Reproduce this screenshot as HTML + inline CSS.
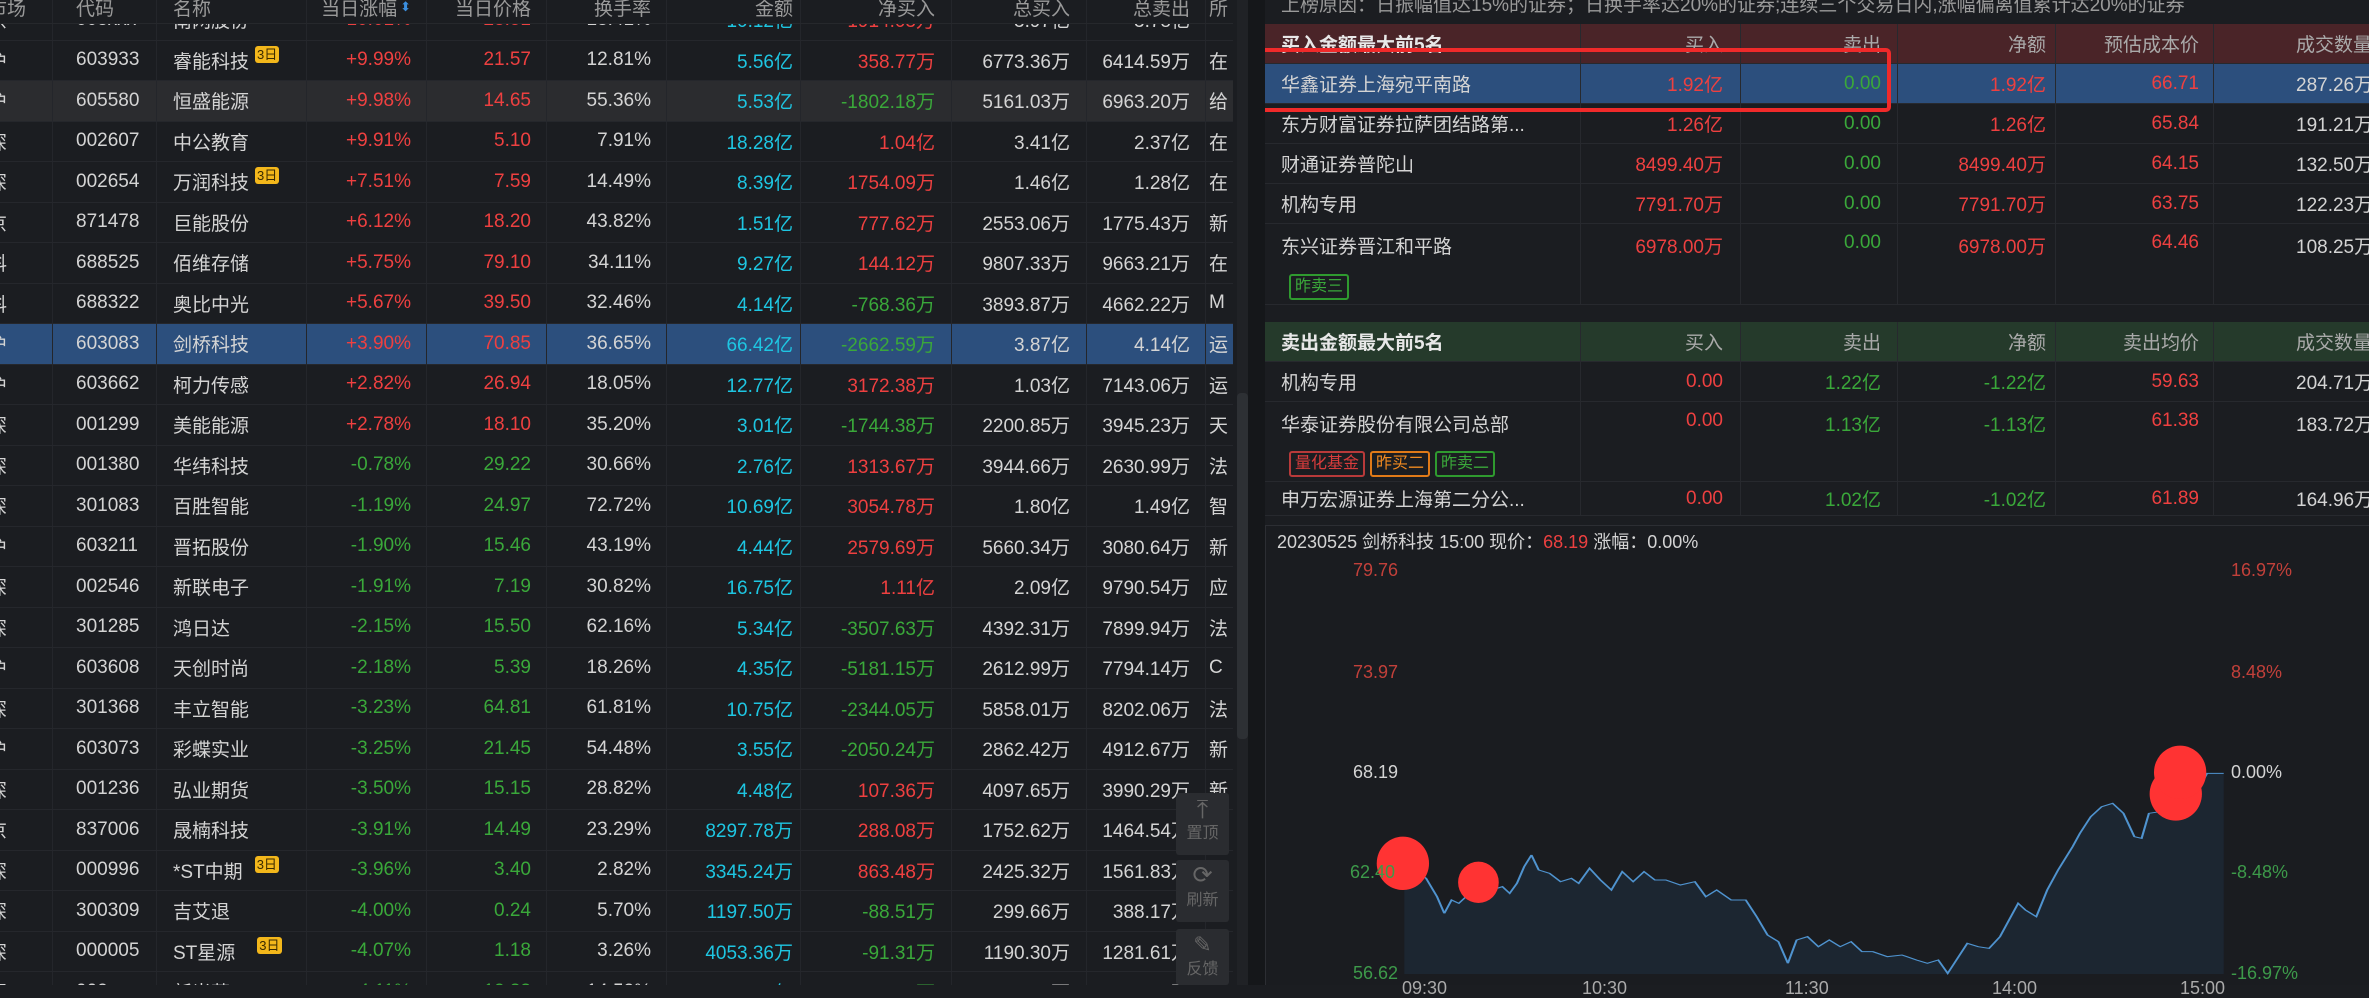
<!DOCTYPE html>
<html><head><meta charset="utf-8">
<style>
*{margin:0;padding:0;box-sizing:border-box}
body{width:2369px;height:985px;overflow:hidden;background:#1b1d21;font-family:"Liberation Sans","Noto Sans CJK SC",sans-serif;font-size:19px;color:#d4d4d4;position:relative}
#left{position:absolute;left:0;top:0;width:1233px;height:985px;overflow:hidden;background:#1b1d21}
.row{position:absolute;left:0;width:1233px;height:40.5px;display:flex;align-items:center;border-bottom:1px solid #25272c;white-space:nowrap}
.row>div{height:100%;display:flex;align-items:center;border-right:1px solid #24262b;overflow:hidden}
.c0{width:53px;padding-left:0;justify-content:flex-start;text-indent:-12px}
.c1{width:104px;padding-left:23px}
.c2{width:150px;padding-left:16px}
.c3{width:120px;justify-content:flex-end;padding-right:15px}
.c4{width:120px;justify-content:flex-end;padding-right:15px}
.c5{width:120px;justify-content:flex-end;padding-right:15px}
.c6{width:134px;justify-content:flex-end;padding-right:7px}
.c7{width:151px;justify-content:flex-end;padding-right:16px}
.c8{width:135px;justify-content:flex-end;padding-right:16px}
.c9{width:119px;justify-content:flex-end;padding-right:15px}
.c10{width:27px;padding-left:3px;border-right:none!important}
.r{color:#ee4040}.g{color:#3aa83a}.b{color:#1ec6e2}.w{color:#d4d4d4}
.bd{display:inline-block;background:#f3b71b;color:#3a2a00;font-size:13px;line-height:17px;padding:0 2px;border-radius:3px;margin-left:6px;position:relative;top:-6px}
.gray{background:#2b2c2f}
.sel{background:#2c4f7d}
#hdr{position:absolute;left:0;top:0;width:1233px;height:24px;background:#1b1d21;z-index:2;overflow:hidden;color:#9a9a9a;border-bottom:1px solid #26282c}
#hdr .row{top:-13px;border:none;color:#9a9a9a}
#sb{position:absolute;left:1237px;top:0;width:11px;height:985px;background:#202226}
#sbt{position:absolute;left:1237px;top:393px;width:11px;height:346px;background:#2d3034;border-radius:4px}
#gap{position:absolute;left:1248px;top:0;width:17px;height:985px;background:#15171a}
#rp{position:absolute;left:1265px;top:0;width:1104px;height:520px;background:#1b1d21;overflow:hidden}
.rr{position:absolute;left:0;width:1104px;height:40px;display:flex;align-items:center;border-bottom:1px solid #27292e;white-space:nowrap}
.rr>div{height:100%;display:flex;align-items:center;border-right:1px solid #27292e}
.n{width:316px;padding-left:16px}
.a{width:160px;justify-content:flex-end;padding-right:17px}
.bb{width:157px;justify-content:flex-end;padding-right:16px}
.cc{width:158px;justify-content:flex-end;padding-right:9px}
.dd{width:158px;justify-content:flex-end;padding-right:14px}
.ee{width:155px;justify-content:flex-end;padding-right:0;border-right:none!important;overflow:visible}
.hb{background:#4a2428;color:#aaa}
.hs{background:#253a2b;color:#aaa}
.hb .n,.hs .n{color:#e8e8e8;font-weight:bold}
.tag{display:inline-block;font-size:16px;line-height:22px;padding:0 4px;border:2px solid;border-radius:3px;margin-right:5px}
#chart{position:absolute;left:1265px;top:525px;width:1104px;height:460px;background:#1a1c20;border-top:1px solid #2c2e33;border-left:1px solid #2c2e33}
.lbl{position:absolute;font-size:18px;line-height:20px}
.fb{position:absolute;left:1176px;width:53px;height:62px;background:#2a2c30;border-radius:3px;color:#666;font-size:16px;text-align:center;z-index:3}
</style></head><body>
<div id="left">
<div id="hdr"><div class="row" style="top:-13px"><div class="c0">市场</div><div class="c1">代码</div><div class="c2">名称</div><div class="c3">当日涨幅<span style="color:#3b8fe0;font-size:13px;margin-left:3px">⬍</span></div><div class="c4">当日价格</div><div class="c5">换手率</div><div class="c6">金额</div><div class="c7">净买入</div><div class="c8">总买入</div><div class="c9">总卖出</div><div class="c10">所</div></div></div>

<div class="row" style="top:0"><div class="c0">京</div><div class="c1">603xxx</div><div class="c2">南网股份</div><div class="c3 r">+10.01%</div><div class="c4 r">23.51</div><div class="c5">18.41%</div><div class="c6 b">10.12亿</div><div class="c7 r">1914.03万</div><div class="c8">3.97亿</div><div class="c9">3.78亿</div><div class="c10"></div></div>
<div class="row" style="top:40.5px"><div class="c0">沪</div><div class="c1">603933</div><div class="c2">睿能科技<span class="bd">3日</span></div><div class="c3 r">+9.99%</div><div class="c4 r">21.57</div><div class="c5">12.81%</div><div class="c6 b">5.56亿</div><div class="c7 r">358.77万</div><div class="c8">6773.36万</div><div class="c9">6414.59万</div><div class="c10">在</div></div>
<div class="row gray" style="top:81px"><div class="c0">沪</div><div class="c1">605580</div><div class="c2">恒盛能源</div><div class="c3 r">+9.98%</div><div class="c4 r">14.65</div><div class="c5">55.36%</div><div class="c6 b">5.53亿</div><div class="c7 g">-1802.18万</div><div class="c8">5161.03万</div><div class="c9">6963.20万</div><div class="c10">给</div></div>
<div class="row" style="top:121.5px"><div class="c0">深</div><div class="c1">002607</div><div class="c2">中公教育</div><div class="c3 r">+9.91%</div><div class="c4 r">5.10</div><div class="c5">7.91%</div><div class="c6 b">18.28亿</div><div class="c7 r">1.04亿</div><div class="c8">3.41亿</div><div class="c9">2.37亿</div><div class="c10">在</div></div>
<div class="row" style="top:162px"><div class="c0">深</div><div class="c1">002654</div><div class="c2">万润科技<span class="bd">3日</span></div><div class="c3 r">+7.51%</div><div class="c4 r">7.59</div><div class="c5">14.49%</div><div class="c6 b">8.39亿</div><div class="c7 r">1754.09万</div><div class="c8">1.46亿</div><div class="c9">1.28亿</div><div class="c10">在</div></div>
<div class="row" style="top:202.5px"><div class="c0">京</div><div class="c1">871478</div><div class="c2">巨能股份</div><div class="c3 r">+6.12%</div><div class="c4 r">18.20</div><div class="c5">43.82%</div><div class="c6 b">1.51亿</div><div class="c7 r">777.62万</div><div class="c8">2553.06万</div><div class="c9">1775.43万</div><div class="c10">新</div></div>
<div class="row" style="top:243px"><div class="c0">科</div><div class="c1">688525</div><div class="c2">佰维存储</div><div class="c3 r">+5.75%</div><div class="c4 r">79.10</div><div class="c5">34.11%</div><div class="c6 b">9.27亿</div><div class="c7 r">144.12万</div><div class="c8">9807.33万</div><div class="c9">9663.21万</div><div class="c10">在</div></div>
<div class="row" style="top:283.5px"><div class="c0">科</div><div class="c1">688322</div><div class="c2">奥比中光</div><div class="c3 r">+5.67%</div><div class="c4 r">39.50</div><div class="c5">32.46%</div><div class="c6 b">4.14亿</div><div class="c7 g">-768.36万</div><div class="c8">3893.87万</div><div class="c9">4662.22万</div><div class="c10">M</div></div>
<div class="row sel" style="top:324px"><div class="c0">沪</div><div class="c1">603083</div><div class="c2">剑桥科技</div><div class="c3 r">+3.90%</div><div class="c4 r">70.85</div><div class="c5">36.65%</div><div class="c6 b">66.42亿</div><div class="c7 g">-2662.59万</div><div class="c8">3.87亿</div><div class="c9">4.14亿</div><div class="c10">运</div></div>
<div class="row" style="top:364.5px"><div class="c0">沪</div><div class="c1">603662</div><div class="c2">柯力传感</div><div class="c3 r">+2.82%</div><div class="c4 r">26.94</div><div class="c5">18.05%</div><div class="c6 b">12.77亿</div><div class="c7 r">3172.38万</div><div class="c8">1.03亿</div><div class="c9">7143.06万</div><div class="c10">运</div></div>
<div class="row" style="top:405px"><div class="c0">深</div><div class="c1">001299</div><div class="c2">美能能源</div><div class="c3 r">+2.78%</div><div class="c4 r">18.10</div><div class="c5">35.20%</div><div class="c6 b">3.01亿</div><div class="c7 g">-1744.38万</div><div class="c8">2200.85万</div><div class="c9">3945.23万</div><div class="c10">天</div></div>
<div class="row" style="top:445.5px"><div class="c0">深</div><div class="c1">001380</div><div class="c2">华纬科技</div><div class="c3 g">-0.78%</div><div class="c4 g">29.22</div><div class="c5">30.66%</div><div class="c6 b">2.76亿</div><div class="c7 r">1313.67万</div><div class="c8">3944.66万</div><div class="c9">2630.99万</div><div class="c10">法</div></div>
<div class="row" style="top:486px"><div class="c0">深</div><div class="c1">301083</div><div class="c2">百胜智能</div><div class="c3 g">-1.19%</div><div class="c4 g">24.97</div><div class="c5">72.72%</div><div class="c6 b">10.69亿</div><div class="c7 r">3054.78万</div><div class="c8">1.80亿</div><div class="c9">1.49亿</div><div class="c10">智</div></div>
<div class="row" style="top:526.5px"><div class="c0">沪</div><div class="c1">603211</div><div class="c2">晋拓股份</div><div class="c3 g">-1.90%</div><div class="c4 g">15.46</div><div class="c5">43.19%</div><div class="c6 b">4.44亿</div><div class="c7 r">2579.69万</div><div class="c8">5660.34万</div><div class="c9">3080.64万</div><div class="c10">新</div></div>
<div class="row" style="top:567px"><div class="c0">深</div><div class="c1">002546</div><div class="c2">新联电子</div><div class="c3 g">-1.91%</div><div class="c4 g">7.19</div><div class="c5">30.82%</div><div class="c6 b">16.75亿</div><div class="c7 r">1.11亿</div><div class="c8">2.09亿</div><div class="c9">9790.54万</div><div class="c10">应</div></div>
<div class="row" style="top:607.5px"><div class="c0">深</div><div class="c1">301285</div><div class="c2">鸿日达</div><div class="c3 g">-2.15%</div><div class="c4 g">15.50</div><div class="c5">62.16%</div><div class="c6 b">5.34亿</div><div class="c7 g">-3507.63万</div><div class="c8">4392.31万</div><div class="c9">7899.94万</div><div class="c10">法</div></div>
<div class="row" style="top:648px"><div class="c0">沪</div><div class="c1">603608</div><div class="c2">天创时尚</div><div class="c3 g">-2.18%</div><div class="c4 g">5.39</div><div class="c5">18.26%</div><div class="c6 b">4.35亿</div><div class="c7 g">-5181.15万</div><div class="c8">2612.99万</div><div class="c9">7794.14万</div><div class="c10">C</div></div>
<div class="row" style="top:688.5px"><div class="c0">深</div><div class="c1">301368</div><div class="c2">丰立智能</div><div class="c3 g">-3.23%</div><div class="c4 g">64.81</div><div class="c5">61.81%</div><div class="c6 b">10.75亿</div><div class="c7 g">-2344.05万</div><div class="c8">5858.01万</div><div class="c9">8202.06万</div><div class="c10">法</div></div>
<div class="row" style="top:729px"><div class="c0">沪</div><div class="c1">603073</div><div class="c2">彩蝶实业</div><div class="c3 g">-3.25%</div><div class="c4 g">21.45</div><div class="c5">54.48%</div><div class="c6 b">3.55亿</div><div class="c7 g">-2050.24万</div><div class="c8">2862.42万</div><div class="c9">4912.67万</div><div class="c10">新</div></div>
<div class="row" style="top:769.5px"><div class="c0">深</div><div class="c1">001236</div><div class="c2">弘业期货</div><div class="c3 g">-3.50%</div><div class="c4 g">15.15</div><div class="c5">28.82%</div><div class="c6 b">4.48亿</div><div class="c7 r">107.36万</div><div class="c8">4097.65万</div><div class="c9">3990.29万</div><div class="c10">新</div></div>
<div class="row" style="top:810px"><div class="c0">京</div><div class="c1">837006</div><div class="c2">晟楠科技</div><div class="c3 g">-3.91%</div><div class="c4 g">14.49</div><div class="c5">23.29%</div><div class="c6 b">8297.78万</div><div class="c7 r">288.08万</div><div class="c8">1752.62万</div><div class="c9">1464.54万</div><div class="c10">新</div></div>
<div class="row" style="top:850.5px"><div class="c0">深</div><div class="c1">000996</div><div class="c2">*ST中期<span class="bd" style="margin-left:12px">3日</span></div><div class="c3 g">-3.96%</div><div class="c4 g">3.40</div><div class="c5">2.82%</div><div class="c6 b">3345.24万</div><div class="c7 r">863.48万</div><div class="c8">2425.32万</div><div class="c9">1561.83万</div><div class="c10">S</div></div>
<div class="row" style="top:891px"><div class="c0">深</div><div class="c1">300309</div><div class="c2">吉艾退</div><div class="c3 g">-4.00%</div><div class="c4 g">0.24</div><div class="c5">5.70%</div><div class="c6 b">1197.50万</div><div class="c7 g">-88.51万</div><div class="c8">299.66万</div><div class="c9">388.17万</div><div class="c10">引</div></div>
<div class="row" style="top:931.5px"><div class="c0">深</div><div class="c1">000005</div><div class="c2">ST星源<span class="bd" style="margin-left:22px">3日</span></div><div class="c3 g">-4.07%</div><div class="c4 g">1.18</div><div class="c5">3.26%</div><div class="c6 b">4053.36万</div><div class="c7 g">-91.31万</div><div class="c8">1190.30万</div><div class="c9">1281.61万</div><div class="c10">S</div></div>
<div class="row" style="top:972px"><div class="c0">深</div><div class="c1">002xxx</div><div class="c2">新光药</div><div class="c3 g">-4.11%</div><div class="c4 g">12.33</div><div class="c5">14.52%</div><div class="c6 b">3.02亿</div><div class="c7 g">-125.83万</div><div class="c8">2555.27万</div><div class="c9">2681.10万</div><div class="c10"></div></div>
</div>
<div id="sb"></div><div id="sbt"></div><div id="gap"></div>

<div class="fb" style="top:793px"><div style="font-size:26px;line-height:28px;margin-top:2px">⤒</div><div style="line-height:22px">置顶</div></div>
<div class="fb" style="top:860px"><div style="font-size:24px;line-height:28px;margin-top:2px">⟳</div><div style="line-height:22px">刷新</div></div>
<div class="fb" style="top:929px;height:56px"><div style="font-size:22px;line-height:28px;margin-top:2px">✎</div><div style="line-height:22px">反馈</div></div>

<div id="rp">
<div style="position:absolute;left:16px;top:-10px;font-size:19px;color:#9a9a9a;white-space:nowrap">上榜原因：日振幅值达15%的证券；日换手率达20%的证券;连续三个交易日内,涨幅偏离值累计达20%的证券</div>
<div class="rr hb" style="top:24px"><div class="n">买入金额最大前5名</div><div class="a">买入</div><div class="bb">卖出</div><div class="cc">净额</div><div class="dd">预估成本价</div><div class="ee" style="justify-content:flex-start;padding-left:82px">成交数量</div></div>
<div class="rr sel" style="top:64px"><div class="n">华鑫证券上海宛平南路</div><div class="a r">1.92亿</div><div class="bb g">0.00</div><div class="cc r">1.92亿</div><div class="dd r">66.71</div><div class="ee" style="justify-content:flex-start;padding-left:82px">287.26万股</div></div>
<div class="rr" style="top:104px"><div class="n">东方财富证券拉萨团结路第...</div><div class="a r">1.26亿</div><div class="bb g">0.00</div><div class="cc r">1.26亿</div><div class="dd r">65.84</div><div class="ee" style="justify-content:flex-start;padding-left:82px">191.21万股</div></div>
<div class="rr" style="top:144px"><div class="n">财通证券普陀山</div><div class="a r">8499.40万</div><div class="bb g">0.00</div><div class="cc r">8499.40万</div><div class="dd r">64.15</div><div class="ee" style="justify-content:flex-start;padding-left:82px">132.50万股</div></div>
<div class="rr" style="top:184px"><div class="n">机构专用</div><div class="a r">7791.70万</div><div class="bb g">0.00</div><div class="cc r">7791.70万</div><div class="dd r">63.75</div><div class="ee" style="justify-content:flex-start;padding-left:82px">122.23万股</div></div>
<div class="rr" style="top:224px;height:81px;align-items:stretch"><div class="n" style="flex-direction:column;align-items:flex-start;justify-content:flex-start;padding-top:8px">东兴证券晋江和平路<span class="tag" style="color:#3aa83a;border-color:#2f9a2f;margin-top:15px;margin-left:8px">昨卖三</span></div><div class="a r" style="align-items:flex-start;padding-top:8px">6978.00万</div><div class="bb g" style="align-items:flex-start;padding-top:8px">0.00</div><div class="cc r" style="align-items:flex-start;padding-top:8px">6978.00万</div><div class="dd r" style="align-items:flex-start;padding-top:8px">64.46</div><div class="ee" style="justify-content:flex-start;align-items:flex-start;padding-top:8px;padding-left:82px">108.25万股</div></div>
<div class="rr hs" style="top:322px"><div class="n">卖出金额最大前5名</div><div class="a">买入</div><div class="bb">卖出</div><div class="cc">净额</div><div class="dd">卖出均价</div><div class="ee" style="justify-content:flex-start;padding-left:82px">成交数量</div></div>
<div class="rr" style="top:362px"><div class="n">机构专用</div><div class="a r">0.00</div><div class="bb g">1.22亿</div><div class="cc g">-1.22亿</div><div class="dd r">59.63</div><div class="ee" style="justify-content:flex-start;padding-left:82px">204.71万股</div></div>
<div class="rr" style="top:402px;height:80px;align-items:stretch"><div class="n" style="flex-direction:column;align-items:flex-start;justify-content:flex-start;padding-top:8px"><span>华泰证券股份有限公司总部</span><span style="margin-top:14px;margin-left:8px;white-space:nowrap"><span class="tag" style="color:#d83c3c;border-color:#b83a3a">量化基金</span><span class="tag" style="color:#f08a20;border-color:#e07a18">昨买二</span><span class="tag" style="color:#3aa83a;border-color:#2f9a2f">昨卖二</span></span></div><div class="a r" style="align-items:flex-start;padding-top:8px">0.00</div><div class="bb g" style="align-items:flex-start;padding-top:8px">1.13亿</div><div class="cc g" style="align-items:flex-start;padding-top:8px">-1.13亿</div><div class="dd r" style="align-items:flex-start;padding-top:8px">61.38</div><div class="ee" style="justify-content:flex-start;align-items:flex-start;padding-top:8px;padding-left:82px">183.72万股</div></div>
<div class="rr" style="top:482px;height:34px"><div class="n">申万宏源证券上海第二分公...</div><div class="a r">0.00</div><div class="bb g">1.02亿</div><div class="cc g">-1.02亿</div><div class="dd r">61.89</div><div class="ee" style="justify-content:flex-start;padding-left:82px">164.96万股</div></div>
<div style="position:absolute;left:-10px;top:48px;width:636px;height:64px;border:4px solid #f02a2a;border-radius:5px"></div>
</div>

<div id="chart"></div>
<svg style="position:absolute;left:1230px;top:520px" width="1139" height="465" viewBox="0 0 1568 1395" preserveAspectRatio="none">
<path d="M240,1030 L270,1075 L285,1130 L295,1180 L305,1140 L315,1150 L330,1120 L345,1095 L360,1110 L375,1100 L385,1120 L395,1090 L405,1040 L415,1005 L425,1050 L440,1060 L455,1085 L470,1075 L480,1090 L495,1045 L510,1080 L525,1110 L540,1055 L555,1085 L570,1055 L585,1080 L600,1080 L620,1095 L640,1085 L655,1130 L670,1110 L690,1140 L710,1140 L725,1190 L740,1245 L755,1265 L768,1330 L780,1260 L795,1250 L810,1280 L825,1260 L840,1280 L855,1265 L870,1295 L885,1295 L905,1310 L925,1305 L945,1320 L960,1330 L975,1320 L988,1360 L1000,1320 L1015,1270 L1030,1280 L1045,1285 L1060,1250 L1075,1190 L1085,1150 L1095,1170 L1110,1190 L1125,1110 L1140,1050 L1160,980 L1170,940 L1185,890 L1200,860 L1215,850 L1230,880 L1245,950 L1255,955 L1265,880 L1280,875 L1300,850 L1320,810 L1340,780 L1345,760 L1368,760 L1368,1362 L240,1362 Z" fill="#1c2631"/>
<path d="M240,1030 L270,1075 L285,1130 L295,1180 L305,1140 L315,1150 L330,1120 L345,1095 L360,1110 L375,1100 L385,1120 L395,1090 L405,1040 L415,1005 L425,1050 L440,1060 L455,1085 L470,1075 L480,1090 L495,1045 L510,1080 L525,1110 L540,1055 L555,1085 L570,1055 L585,1080 L600,1080 L620,1095 L640,1085 L655,1130 L670,1110 L690,1140 L710,1140 L725,1190 L740,1245 L755,1265 L768,1330 L780,1260 L795,1250 L810,1280 L825,1260 L840,1280 L855,1265 L870,1295 L885,1295 L905,1310 L925,1305 L945,1320 L960,1330 L975,1320 L988,1360 L1000,1320 L1015,1270 L1030,1280 L1045,1285 L1060,1250 L1075,1190 L1085,1150 L1095,1170 L1110,1190 L1125,1110 L1140,1050 L1160,980 L1170,940 L1185,890 L1200,860 L1215,850 L1230,880 L1245,950 L1255,955 L1265,880 L1280,875 L1300,850 L1320,810 L1340,780 L1345,760 L1368,760" fill="none" stroke="#4f93cf" stroke-width="3"/>
<ellipse cx="238" cy="1030" rx="36" ry="80" fill="#ff3333"/>
<ellipse cx="342" cy="1087" rx="28" ry="62" fill="#ff3333"/>
<ellipse cx="1302" cy="822" rx="36" ry="80" fill="#ff3333"/>
<ellipse cx="1308" cy="757" rx="36" ry="80" fill="#ff3333"/>
</svg>
<div class="lbl" style="left:1277px;top:532px;color:#d4d4d4;font-size:18px;white-space:nowrap">20230525 剑桥科技 15:00 现价：<span class="r">68.19</span> 涨幅：0.00%</div>
<div class="lbl" style="left:1340px;width:58px;text-align:right;top:560px;color:#c2403a">79.76</div>
<div class="lbl" style="left:1340px;width:58px;text-align:right;top:662px;color:#c2403a">73.97</div>
<div class="lbl" style="left:1340px;width:58px;text-align:right;top:762px;color:#d4d4d4">68.19</div>
<div class="lbl" style="left:1350px;top:862px;color:#3d9a4a">62.40</div>
<div class="lbl" style="left:1340px;width:58px;text-align:right;top:963px;color:#3d9a4a">56.62</div>
<div class="lbl" style="left:2231px;top:560px;color:#c2403a">16.97%</div>
<div class="lbl" style="left:2231px;top:662px;color:#c2403a">8.48%</div>
<div class="lbl" style="left:2231px;top:762px;color:#d4d4d4">0.00%</div>
<div class="lbl" style="left:2231px;top:862px;color:#3d9a4a">-8.48%</div>
<div class="lbl" style="left:2231px;top:963px;color:#3d9a4a">-16.97%</div>
<div class="lbl" style="left:1402px;top:978px;color:#aaa">09:30</div>
<div class="lbl" style="left:1582px;top:978px;color:#aaa">10:30</div>
<div class="lbl" style="left:1785px;top:978px;color:#aaa">11:30</div>
<div class="lbl" style="left:1992px;top:978px;color:#aaa">14:00</div>
<div class="lbl" style="left:2180px;top:978px;color:#aaa">15:00</div>
</body></html>
